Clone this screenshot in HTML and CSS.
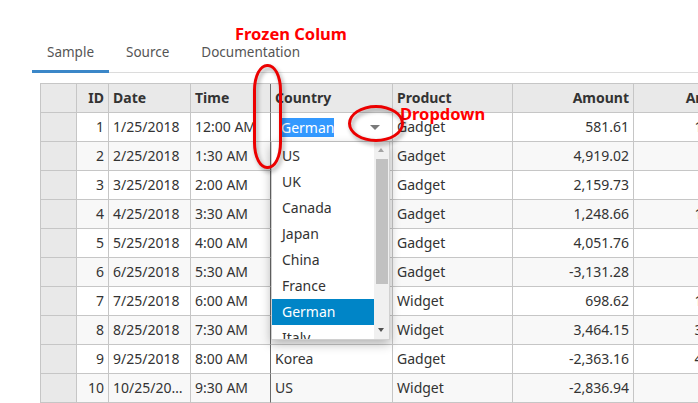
FILE: index.html
```html
<!DOCTYPE html>
<html>
<head>
<meta charset="utf-8">
<link rel="stylesheet" href="styles.css">
</head>
<body>
<div class="page">
  <ul class="tabs">
    <li class="tab active">Sample</li>
    <li class="tab">Source</li>
    <li class="tab">Documentation</li>
  </ul>

  <div class="grid">
    <div class="row hdr">
      <div class="c rh"></div><div class="c r">ID</div><div class="c">Date</div><div class="c frz">Time</div><div class="c">Country</div><div class="c">Product</div><div class="c r">Amount</div><div class="c r">Amount2</div>
    </div>
    <div class="row">
      <div class="c rh"></div><div class="c r">1</div><div class="c">1/25/2018</div><div class="c frz clip">12:00 AM</div>
      <div class="c edit">
        <div class="editor"><span class="sel">German</span><span class="btn"><span class="tri"></span></span></div>
        <div class="list">
          <div class="items">
            <div class="item">US</div>
            <div class="item">UK</div>
            <div class="item">Canada</div>
            <div class="item">Japan</div>
            <div class="item">China</div>
            <div class="item">France</div>
            <div class="item on">German</div>
            <div class="item">Italy</div>
          </div>
          <div class="sbar">
            <span class="arr up"></span>
            <span class="thumb"></span>
            <span class="arr dn"></span>
          </div>
        </div>
      </div>
      <div class="c">Gadget</div><div class="c r">581.61</div><div class="c r">1,162.89</div>
    </div>
    <div class="row alt">
      <div class="c rh"></div><div class="c r">2</div><div class="c">2/25/2018</div><div class="c frz">1:30 AM</div><div class="c"></div><div class="c">Gadget</div><div class="c r">4,919.02</div><div class="c r">822.40</div>
    </div>
    <div class="row">
      <div class="c rh"></div><div class="c r">3</div><div class="c">3/25/2018</div><div class="c frz">2:00 AM</div><div class="c"></div><div class="c">Gadget</div><div class="c r">2,159.73</div><div class="c r">315.08</div>
    </div>
    <div class="row alt">
      <div class="c rh"></div><div class="c r">4</div><div class="c">4/25/2018</div><div class="c frz">3:30 AM</div><div class="c"></div><div class="c">Gadget</div><div class="c r">1,248.66</div><div class="c r">1,407.52</div>
    </div>
    <div class="row">
      <div class="c rh"></div><div class="c r">5</div><div class="c">5/25/2018</div><div class="c frz">4:00 AM</div><div class="c"></div><div class="c">Gadget</div><div class="c r">4,051.76</div><div class="c r">96.31</div>
    </div>
    <div class="row alt">
      <div class="c rh"></div><div class="c r">6</div><div class="c">6/25/2018</div><div class="c frz">5:30 AM</div><div class="c"></div><div class="c">Gadget</div><div class="c r">-3,131.28</div><div class="c r">540.17</div>
    </div>
    <div class="row">
      <div class="c rh"></div><div class="c r">7</div><div class="c">7/25/2018</div><div class="c frz">6:00 AM</div><div class="c"></div><div class="c">Widget</div><div class="c r">698.62</div><div class="c r">1,930.44</div>
    </div>
    <div class="row alt">
      <div class="c rh"></div><div class="c r">8</div><div class="c">8/25/2018</div><div class="c frz">7:30 AM</div><div class="c"></div><div class="c">Widget</div><div class="c r">3,464.15</div><div class="c r">3,218.70</div>
    </div>
    <div class="row">
      <div class="c rh"></div><div class="c r">9</div><div class="c">9/25/2018</div><div class="c frz">8:00 AM</div><div class="c">Korea</div><div class="c">Gadget</div><div class="c r">-2,363.16</div><div class="c r">4,075.93</div>
    </div>
    <div class="row alt">
      <div class="c rh"></div><div class="c r">10</div><div class="c ell">10/25/2018</div><div class="c frz">9:30 AM</div><div class="c">US</div><div class="c">Widget</div><div class="c r">-2,836.94</div><div class="c r">612.85</div>
    </div>
  </div>

  <div class="note note-frozen">Frozen Colum</div>
  <div class="note note-dd">Dropdown</div>
  <div class="ring ring-frozen"></div>
  <div class="ring ring-dd"></div>
</div>
</body>
</html>
```

FILE: styles.css
```css
html, body {
  margin: 0;
  padding: 0;
  overflow: hidden;
  background: #fff;
}

.page {
  position: relative;
  width: 698px;
  height: 403px;
  overflow: hidden;
  padding-left: 32px;
  box-sizing: border-box;
  font-family: "Noto Sans", "Liberation Sans", sans-serif;
  font-size: 14px;
  color: #333;
}

.tabs {
  list-style: none;
  margin: 30px 0 0 0;
  padding: 0;
  display: flex;
  border-bottom: 1px solid #dcdcdc;
}

.tab {
  padding: 12px 15px 8px;
  line-height: 20px;
  font-size: 13.5px;
  color: #555;
  border-bottom: 3px solid transparent;
  margin-bottom: -1px;
  margin-right: 2px;
}

.tab.active {
  border-bottom-color: #3b87c8;
}

.grid {
  margin: 10px 0 0 8px;
  width: 755px;
  border-top: 1px solid #c6c6c6;
  border-left: 1px solid #c6c6c6;
}

.row {
  display: grid;
  grid-template-columns: 36px 32px 82px 80px 122px 120px 121px 121px;
  background: #fff;
}

.row.alt {
  background: #f8f8f8;
}

.row.hdr {
  background: #e9e9e9;
  font-weight: bold;
  color: #333;
}

.c {
  box-sizing: border-box;
  height: 29px;
  line-height: 28px;
  padding: 0 4px;
  border-right: 1px solid #c6c6c6;
  border-bottom: 1px solid #c6c6c6;
  white-space: nowrap;
  overflow: hidden;
}

.c.r {
  text-align: right;
}

.c.rh {
  background: #e9e9e9;
}

.c.frz {
  border-right-color: #6b6b6b;
}

.c.clip {
  text-overflow: clip;
}

.c.ell {
  text-overflow: ellipsis;
}

.c.edit {
  position: relative;
  overflow: visible;
  padding: 0;
  background: #fff;
  z-index: 2;
}

.editor {
  display: flex;
  align-items: center;
  height: 28px;
  padding-left: 10px;
}

.sel {
  background: #3399ff;
  color: #fff;
  line-height: 19px;
}

.btn {
  margin-left: auto;
  width: 34px;
  height: 28px;
  display: flex;
  align-items: center;
  justify-content: center;
}

.tri {
  width: 0;
  height: 0;
  border-left: 5px solid transparent;
  border-right: 5px solid transparent;
  border-top: 5px solid #7a7a7a;
}

.list {
  position: absolute;
  left: 0;
  top: 29px;
  width: 119px;
  height: 198px;
  box-sizing: border-box;
  background: #fff;
  border: 1px solid #d0d0d0;
  border-top: none;
  box-shadow: 0 4px 10px rgba(0, 0, 0, 0.28);
  display: flex;
  overflow: hidden;
}

.items {
  flex: 1;
  padding-top: 1px;
}

.item {
  height: 26px;
  line-height: 26px;
  padding-left: 10px;
  color: #333;
  font-weight: normal;
}

.item.on {
  background: #0085c7;
  color: #fff;
}

.sbar {
  position: relative;
  width: 15px;
  background: #f0f0f0;
}

.thumb {
  position: absolute;
  left: 2px;
  right: 1px;
  top: 17px;
  height: 125px;
  background: #c1c1c1;
}

.arr {
  position: absolute;
  left: 4px;
  width: 0;
  height: 0;
  border-left: 3.5px solid transparent;
  border-right: 3.5px solid transparent;
}

.arr.up {
  top: 6px;
  border-bottom: 4px solid #a3a3a3;
}

.arr.dn {
  bottom: 7px;
  border-top: 4px solid #505050;
}

.note {
  position: absolute;
  font-weight: bold;
  font-size: 16.5px;
  line-height: 20px;
  color: #f00;
  z-index: 5;
}

.note-frozen {
  left: 235px;
  top: 24px;
}

.note-dd {
  left: 400px;
  top: 104px;
}

.ring {
  position: absolute;
  box-sizing: border-box;
  border: 3px solid #ec0000;
  z-index: 6;
  filter: drop-shadow(2px 3px 2px rgba(0, 0, 0, 0.35));
}

.ring-frozen {
  left: 253px;
  top: 64px;
  width: 29px;
  height: 105px;
  border-radius: 14px / 26px;
}

.ring-dd {
  left: 348px;
  top: 105px;
  width: 56px;
  height: 37px;
  border-radius: 50%;
}
```
